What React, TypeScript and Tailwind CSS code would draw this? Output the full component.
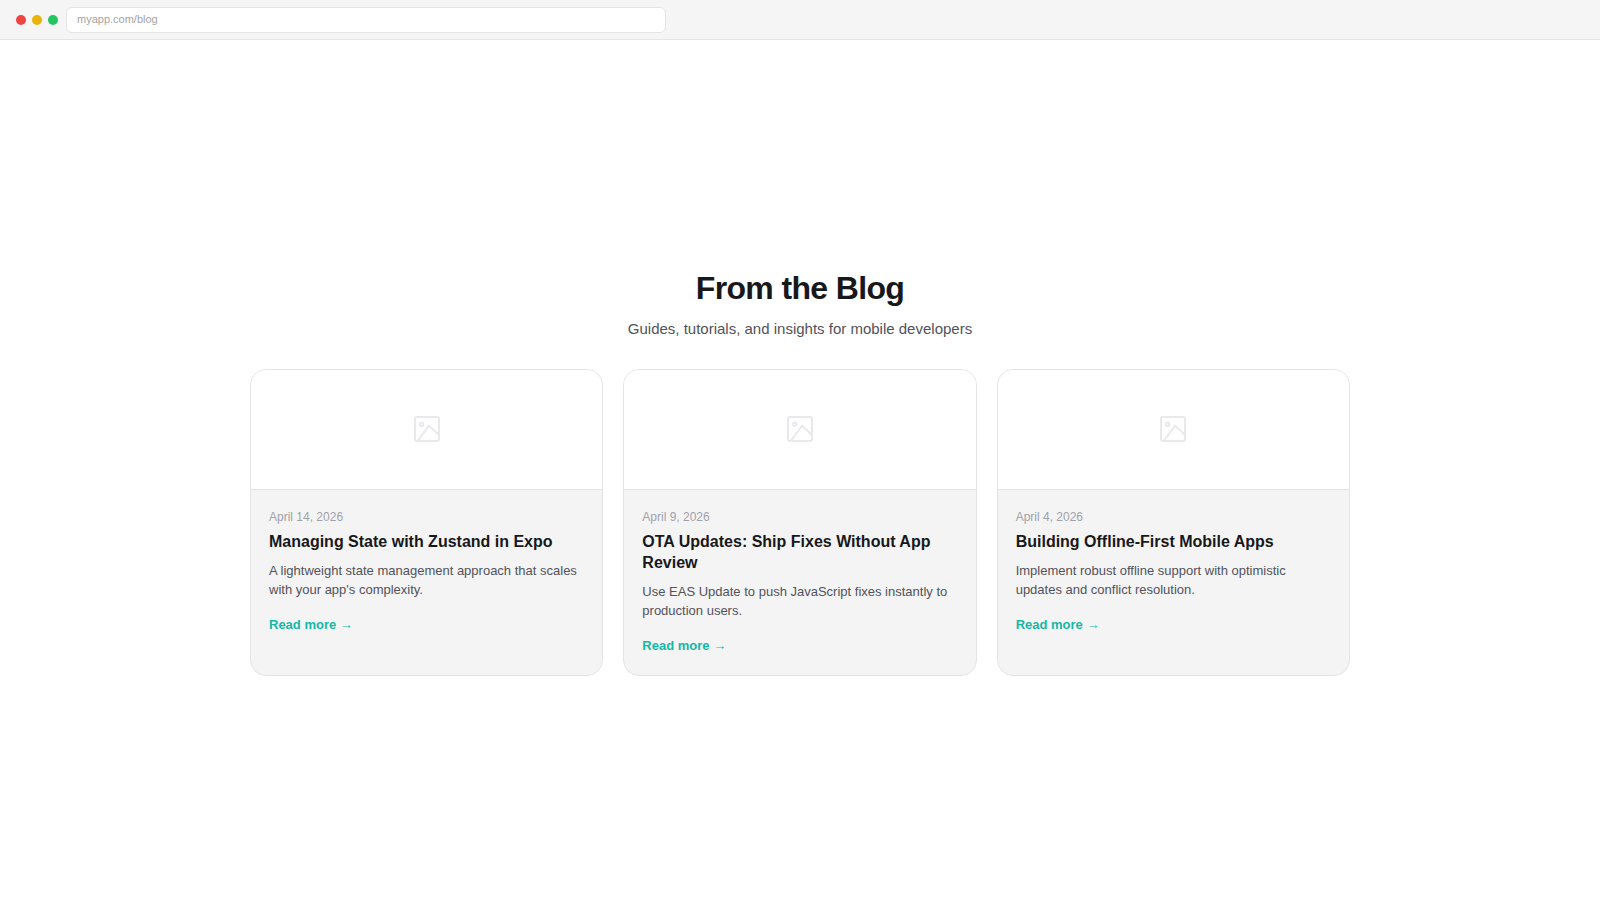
const posts = [
  {
    date: "April 14, 2026",
    title: "Managing State with Zustand in Expo",
    text: "A lightweight state management approach that scales with your app's complexity.",
  },
  {
    date: "April 9, 2026",
    title: "OTA Updates: Ship Fixes Without App Review",
    text: "Use EAS Update to push JavaScript fixes instantly to production users.",
  },
  {
    date: "April 4, 2026",
    title: "Building Offline-First Mobile Apps",
    text: "Implement robust offline support with optimistic updates and conflict resolution.",
  },
];

function ImageIcon() {
  return (
    <svg width="32" height="32" viewBox="0 0 24 24" fill="none" stroke="#e9e9ec" strokeWidth="1.5">
      <rect x="3" y="3" width="18" height="18" rx="1.5" />
      <circle cx="8" cy="8.5" r="1.3" />
      <path d="M21 16.5l-7.5-7L5 21" />
    </svg>
  );
}

export default function App() {
  return (
    <div className="min-h-screen flex flex-col bg-white font-['Liberation_Sans',Arial,sans-serif]">
      <div className="h-10 flex items-center gap-2 px-4 bg-[#f5f5f5] border-b border-[#e5e5e5]">
        <div className="flex gap-1.5">
          <span className="w-2.5 h-2.5 rounded-full bg-[#ef4444]" />
          <span className="w-2.5 h-2.5 rounded-full bg-[#eab308]" />
          <span className="w-2.5 h-2.5 rounded-full bg-[#22c55e]" />
        </div>
        <div className="w-[600px] h-[26px] flex items-center px-2.5 bg-white border border-[#e5e5e5] rounded-md text-[11px] text-[#a3a3a3]">
          myapp.com/blog
        </div>
      </div>

      <main className="flex-1 flex items-center justify-center pt-[5px]">
        <section className="w-[1100px]">
          <div className="text-center mb-7">
            <h1 className="text-[32px] leading-[1.2] font-bold tracking-[-0.64px] text-[#18181b] mb-[11px]">From the Blog</h1>
            <p className="text-[15px] leading-[1.5] text-[#52525b]">Guides, tutorials, and insights for mobile developers</p>
          </div>
          <div className="grid grid-cols-3 gap-5">
            {posts.map((post) => (
              <article key={post.title} className="flex flex-col bg-[#f4f4f5] border border-[#e4e4e7] rounded-2xl overflow-hidden">
                <div className="h-[120px] shrink-0 flex items-center justify-center bg-white border-b border-[#e4e4e7]">
                  <ImageIcon />
                </div>
                <div className="px-[18px] pt-[18px] pb-5">
                  <div className="text-xs leading-[18px] text-[#a1a1aa] mb-[5px]">{post.date}</div>
                  <h2 className="text-base leading-[21px] font-bold text-[#18181b] mb-[10.5px]">{post.title}</h2>
                  <p className="text-[13px] leading-[1.45] text-[#52525b] mb-[15px]">{post.text}</p>
                  <a className="block text-[13px] leading-[1.5] font-bold text-[#14b8a6]">Read more →</a>
                </div>
              </article>
            ))}
          </div>
        </section>
      </main>
    </div>
  );
}
